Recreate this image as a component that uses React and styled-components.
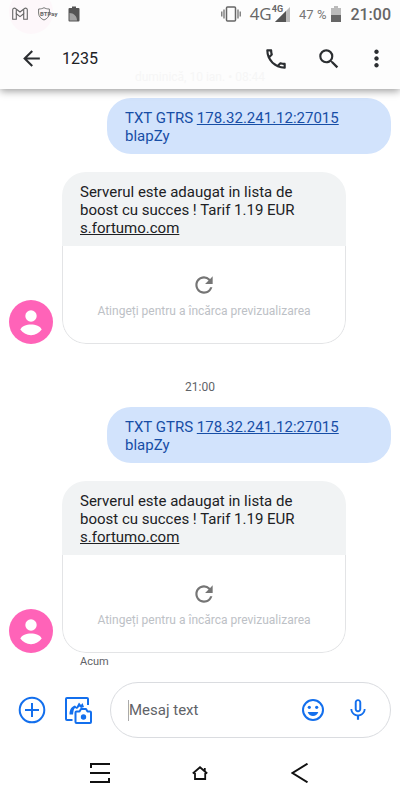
import React, { useState } from "react";
import styled, { createGlobalStyle } from "styled-components";
import {
  MdArrowBack,
  MdMicNone,
  MdMoreVert,
  MdOutlineCall,
  MdRefresh,
  MdSearch,
} from "react-icons/md";

const messages = [
  { id: 1, type: "out", link: "178.32.241.12:27015" },
  { id: 2, type: "in" },
  { id: 3, type: "time", text: "21:00" },
  { id: 4, type: "out", link: "178.32.241.12:27015" },
  { id: 5, type: "in", status: "Acum" },
];

const StatusBar = () => (
  <Status>
    <StatusIcons>
      <svg width="16" height="14" viewBox="0 0 16 14" fill="none" stroke="#666" strokeWidth="1.1">
        <path d="M.7 12.3V2.8C.7 1 2.5.6 3.8 1.7L8 5l4.2-3.3c1.3-1.1 3.1-.7 3.1 1.1v9.5h-3.600V6.700L8 9.600 4.300 6.700v5.600z" />
        <path d="M4.300 6.700V2.500M11.700 6.700V2.500" />
      </svg>
      <PayIcon>
        <svg width="12" height="14" viewBox="0 0 12 14" fill="none" stroke="#777">
          <path d="M.6 2C3 2 4.600 1.500 6 .7 7.400 1.500 9 2 11.400 2v4c0 3.500-2.400 5.800-5.400 7C3 11.800.6 9.500.6 6z" />
        </svg>
        <PayText>BTPay</PayText>
      </PayIcon>
      <svg width="12" height="16" viewBox="0 0 12 16">
        <path d="M1.500 2H4V.5h4V2h2.500q1 0 1 1v11.500q0 1-1 1h-9q-1 0-1-1V3q0-1 1-1z" fill="#555" />
        <path d="M1.500 7c4.200 0 7.500 3.300 7.500 7.500H1.500z" fill="#a3a3a3" />
      </svg>
    </StatusIcons>
    <StatusIcons $end>
      <svg width="20" height="16" viewBox="0 0 20 16" fill="none" stroke="#666">
        <rect x="5.500" y="1" width="9" height="14" rx="1" strokeWidth="1.500" />
        <path d="M3 3.500v9M17 3.500v9M.8 5.500v5M19.200 5.500v5" strokeWidth="1.200" />
      </svg>
      <Network>
        <Carrier>4G</Carrier>
        <SmallCarrier>4G</SmallCarrier>
        <svg width="15" height="15" viewBox="0 0 15 15">
          <path d="M0 15L15 0v15z" fill="#bbb" />
          <path d="M0 15L11 4v11z" fill="#555" />
        </svg>
      </Network>
      <Battery>47 %</Battery>
      <svg width="10" height="16" viewBox="0 0 10 16">
        <path d="M3 0h4v2h3v14H0V2h3z" fill="#bbb" />
        <path d="M0 9h10v7H0z" fill="#666" />
      </svg>
      <Clock>21:00</Clock>
    </StatusIcons>
  </Status>
);

const Avatar = () => (
  <AvatarCircle>
    <svg width="44" height="44" viewBox="0 0 44 44" fill="#fff">
      <circle cx="22" cy="16" r="5.700" />
      <path d="M11.300 29.600C12.500 26.200 17.500 24.500 22 24.500s9.500 1.700 10.700 5.100C30.300 33 26.500 35.200 22 35.200S13.700 33 11.300 29.600z" />
    </svg>
  </AvatarCircle>
);

const Message = ({ message }) => {
  if (message.type === "time") {
    return <Time>{message.text}</Time>;
  }

  if (message.type === "out") {
    return (
      <Outgoing>
        TXT GTRS <TextLink href="#server">{message.link}</TextLink>
        <br />
        blapZy
      </Outgoing>
    );
  }

  return (
    <div>
      <IncomingRow>
        <Avatar />
        <Incoming>
          <IncomingText>
            Serverul este adaugat in lista de boost cu succes ! Tarif 1.19 EUR{" "}
            <TextLink href="#fortumo">s.fortumo.com</TextLink>
          </IncomingText>
          <Preview type="button">
            <MdRefresh size={26} color="#757575" />
            <span>Atingeți pentru a încărca previzualizarea</span>
          </Preview>
        </Incoming>
      </IncomingRow>
      {message.status && <Delivery>{message.status}</Delivery>}
    </div>
  );
};

const App = () => {
  const [text, setText] = useState("");

  return (
    <>
      <GlobalStyle />
      <Page>
        <Header>
          <FadedAvatar />
          <FadedDate>duminică, 10 ian. • 08:44</FadedDate>
          <StatusBar />
          <Toolbar>
            <IconButton aria-label="Înapoi">
              <MdArrowBack size={25} />
            </IconButton>
            <Title>1235</Title>
            <IconButton aria-label="Apelați">
              <MdOutlineCall size={26} />
            </IconButton>
            <IconButton aria-label="Căutați">
              <MdSearch size={26} />
            </IconButton>
            <IconButton aria-label="Mai multe opțiuni" $narrow>
              <MdMoreVert size={27} />
            </IconButton>
          </Toolbar>
        </Header>

        <Thread>
          {messages.map((message) => (
            <Message key={message.id} message={message} />
          ))}
        </Thread>

        <Composer>
          <ActionButton aria-label="Adăugați">
            <svg width="28" height="28" viewBox="0 0 28 28" fill="none" stroke="currentColor" strokeWidth="2">
              <circle cx="14" cy="14" r="12.300" />
              <path d="M14 7v14M7 14h14" />
            </svg>
          </ActionButton>
          <ActionButton aria-label="Galerie">
            <svg width="28" height="28" viewBox="0 0 28 28" fill="none" stroke="currentColor" strokeWidth="2" strokeLinejoin="round">
              <path d="M8.500 24H3q-1 0-1-1V3q0-1 1-1h20q1 0 1 1v6" />
              <path d="M5.500 18.500c0-5 2-8 5.500-9l1.500 1.500 2.500-4.500L17 9l1.500-2 1.500 4-3 1-1.500-1.500L13 13l-2-1c-1.500 1-1.500 3.500-2 6.500z" fill="currentColor" stroke="none" />
              <path d="M11.500 16.500q0-1 1-1h3l1.500-2.500h5l1.500 2.500h2.500q1 0 1 1V26q0 1-1 1H12.500q-1 0-1-1z" />
              <circle cx="19.500" cy="21" r="2.700" fill="currentColor" stroke="none" />
            </svg>
          </ActionButton>
          <InputBox>
            <Input
              aria-label="Mesaj text"
              placeholder="Mesaj text"
              value={text}
              onChange={(e) => setText(e.target.value)}
            />
            <ActionButton aria-label="Emoji">
              <svg width="24" height="24" viewBox="0 0 24 24" fill="currentColor">
                <circle cx="12" cy="12" r="10" fill="none" stroke="currentColor" strokeWidth="2" />
                <circle cx="8.300" cy="9.300" r="1.600" />
                <circle cx="15.700" cy="9.300" r="1.600" />
                <path d="M6.700 14h10.600c-.9 2.500-2.900 4-5.300 4s-4.400-1.500-5.300-4z" />
              </svg>
            </ActionButton>
            <ActionButton aria-label="Mesaj vocal">
              <MdMicNone size={26} />
            </ActionButton>
          </InputBox>
        </Composer>

        <NavBar>
          <NavButton aria-label="Recente">
            <svg width="20" height="20" viewBox="0 0 20 20" fill="none" stroke="#111" strokeWidth="2">
              <path d="M1 5V1h19M0 10h20M0 19h19v-4" />
            </svg>
          </NavButton>
          <NavButton aria-label="Acasă">
            <svg width="16" height="16" viewBox="0 0 16 16" fill="none" stroke="#111" strokeWidth="1.800">
              <path d="M.8 8.500L8 2.300l7.200 6.200M3 8v6h10.200V8M12.800 3v3.500" />
            </svg>
          </NavButton>
          <NavButton aria-label="Înapoi la ecranul anterior">
            <svg width="18" height="20" viewBox="0 0 18 20" fill="none" stroke="#111" strokeWidth="2">
              <path d="M16.500 .7L1.500 10l15 9.300" />
            </svg>
          </NavButton>
        </NavBar>
      </Page>
    </>
  );
};

export default App;

const GlobalStyle = createGlobalStyle`
  * {
    box-sizing: border-box;
  }

  body {
    margin: 0;
    background-color: white;
    font-family: Roboto, "Liberation Sans", sans-serif;
  }

  svg {
    display: block;
    flex-shrink: 0;
  }
`;

const Button = styled.button`
  padding: 0;
  border: none;
  background: none;
  font-family: inherit;
  cursor: pointer;
`;

const Page = styled.div`
  min-height: 100vh;
  display: flex;
  flex-direction: column;
`;

const Header = styled.header`
  position: relative;
  background-color: #fdfdfd;
  box-shadow: 0 2px 8px rgba(0, 0, 0, 0.4);
`;

const FadedAvatar = styled.div`
  position: absolute;
  top: -10px;
  left: 9px;
  width: 44px;
  height: 44px;
  border-radius: 50%;
  background-color: #fdf7fa;
`;

const FadedDate = styled.div`
  position: absolute;
  bottom: 4px;
  width: 100%;
  text-align: center;
  font-size: 12px;
  line-height: 16px;
  color: #f6f6f6;
`;

const Status = styled.div`
  position: relative;
  height: 28px;
  padding: 0 9px 0 12px;
  display: flex;
  align-items: center;
  justify-content: space-between;
  color: #666;
`;

const StatusIcons = styled.div`
  display: flex;
  align-items: center;
  gap: ${(props) => (props.$end ? "9px" : "10px")};
`;

const PayIcon = styled.div`
  width: 20px;
  display: flex;
  align-items: center;
`;

const PayText = styled.span`
  margin-left: -10px;
  font-size: 6px;
  font-weight: bold;
  line-height: 10px;
`;

const Network = styled.div`
  display: flex;
  align-items: center;
`;

const Carrier = styled.span`
  font-family: "Open Sans", sans-serif;
  font-size: 17px;
  line-height: 20px;
`;

const SmallCarrier = styled.span`
  align-self: flex-start;
  margin-right: -8px;
  font-size: 9px;
  font-weight: bold;
  line-height: 10px;
`;

const Battery = styled.span`
  margin-right: -4px;
  font-size: 13px;
  color: #777;
`;

const Clock = styled.span`
  font-size: 16px;
  font-weight: 500;
`;

const Toolbar = styled.div`
  position: relative;
  height: 61px;
  padding: 0 10px 0 11px;
  display: flex;
  align-items: center;
`;

const IconButton = styled(Button)`
  width: ${(props) => (props.$narrow ? "28px" : "40px")};
  height: 40px;
  display: flex;
  align-items: center;
  justify-content: center;
  color: #2b2e31;

  & + & {
    margin-left: 13px;
  }
`;

const Title = styled.h1`
  flex: 1;
  margin: 0 0 0 11px;
  font-size: 16px;
  font-weight: normal;
  color: #202124;
`;

const Thread = styled.main`
  flex: 1;
  padding: 9px 9px 0;
  display: flex;
  flex-direction: column;
  gap: 18px;
`;

const Outgoing = styled.div`
  width: 284px;
  align-self: flex-end;
  padding: 11px 18px 9px;
  border-radius: 24px;
  background-color: #d2e3fc;
  color: #174ea6;
  font-size: 15px;
  line-height: 18px;
`;

const TextLink = styled.a`
  color: inherit;
`;

const IncomingRow = styled.div`
  display: flex;
  align-items: flex-end;
  gap: 9px;
`;

const AvatarCircle = styled.div`
  width: 44px;
  height: 44px;
  border-radius: 50%;
  background-color: #ff63b8;
`;

const Incoming = styled.div`
  width: 284px;
  border-radius: 24px;
  overflow: hidden;
`;

const IncomingText = styled.div`
  padding: 11px 40px 9px 18px;
  background-color: #f1f3f4;
  color: #202124;
  font-size: 15px;
  line-height: 18px;
`;

const Preview = styled(Button)`
  width: 100%;
  height: 98px;
  padding-top: 2px;
  border: 1px solid #e3e4e6;
  border-top: none;
  border-radius: 0 0 24px 24px;
  display: flex;
  flex-direction: column;
  align-items: center;
  justify-content: center;
  gap: 5px;
  color: #bdc1c6;
  font-size: 12px;
  line-height: 16px;
`;

const Time = styled.div`
  margin: 17px 0 -6px;
  text-align: center;
  font-size: 12px;
  line-height: 16px;
  color: #5f6368;
`;

const Delivery = styled.div`
  margin: 1px 0 0 71px;
  font-size: 11px;
  line-height: 16px;
  color: #5f6368;
`;

const Composer = styled.div`
  padding: 12px 9px 8px 18px;
  display: flex;
  align-items: center;
  gap: 18px;
`;

const ActionButton = styled(Button)`
  color: #136fed;
`;

const InputBox = styled.div`
  flex: 1;
  min-width: 0;
  height: 56px;
  padding: 0 19px 0 17px;
  border: 1px solid #dadce0;
  border-radius: 28px;
  display: flex;
  align-items: center;
  gap: 20px;
`;

const Input = styled.input`
  flex: 1;
  min-width: 0;
  height: 21px;
  padding: 0;
  border: none;
  border-left: 1px solid #aaa;
  outline: none;
  font-family: inherit;
  font-size: 15px;
  color: #202124;

  &::placeholder {
    color: #5f6368;
    opacity: 1;
  }
`;

const NavBar = styled.nav`
  height: 54px;
  padding: 0 50px;
  display: flex;
  align-items: center;
`;

const NavButton = styled(Button)`
  flex: 1;
  display: flex;
  justify-content: center;
`;
